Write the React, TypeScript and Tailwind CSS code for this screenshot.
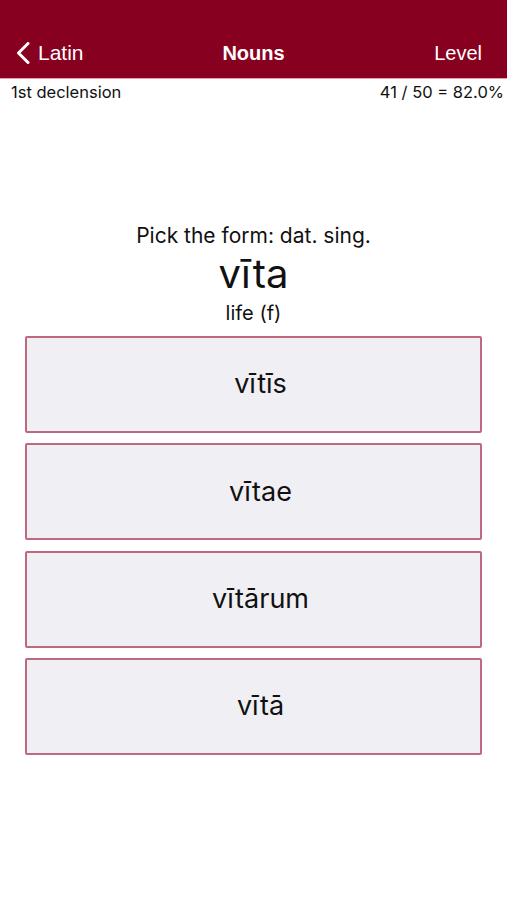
const choices = ['vītīs', 'vītae', 'vītārum', 'vītā'];

export default function App() {
  return (
    <div className="min-h-[900px] bg-white font-['Inter',sans-serif] text-[#111]">
      <div className="h-[78px] bg-[#88001f] flex items-end">
        <div className="h-[50px] w-full flex items-center justify-between px-[16px] text-white text-[20px] font-['Liberation_Sans',Arial,sans-serif]">
          <div className="flex items-center w-[100px]">
            <svg width="14" height="22" viewBox="0 0 14 22" fill="none" className="mr-[8px]">
              <path d="M12 1.5 L2.5 11 L12 20.5" stroke="white" strokeWidth="3" strokeLinecap="round" strokeLinejoin="round" />
            </svg>
            <span className="text-[21px]">Latin</span>
          </div>
          <span className="font-bold">Nouns</span>
          <span className="w-[100px] text-right pr-[9px]">Level</span>
        </div>
      </div>
      <div className="h-px bg-[#e9a2ab]" />
      <div className="flex justify-between pl-[11px] pr-[3px] pt-[2px] text-[16.5px] leading-[22px]">
        <span>1st declension</span>
        <span>41 / 50 = 82.0%</span>
      </div>

      <div className="mt-[120px] flex flex-col items-center">
        <div className="h-[26px] text-[21px] leading-[26px]">Pick the form: dat. sing.</div>
        <div className="h-[51px] text-[40px] leading-[50px]">vīta</div>
        <div className="h-[26px] text-[20px] leading-[26px]">life (f)</div>
      </div>

      <div className="mt-[10px] px-[25px] flex flex-col gap-[10.4px]">
        {choices.map((c) => (
          <button
            key={c}
            className="h-[97px] w-full bg-[#efeff4] border-2 border-[#c06880] rounded-[2px] text-[27px] pl-[14px] flex items-center justify-center"
          >
            {c}
          </button>
        ))}
      </div>
    </div>
  );
}
